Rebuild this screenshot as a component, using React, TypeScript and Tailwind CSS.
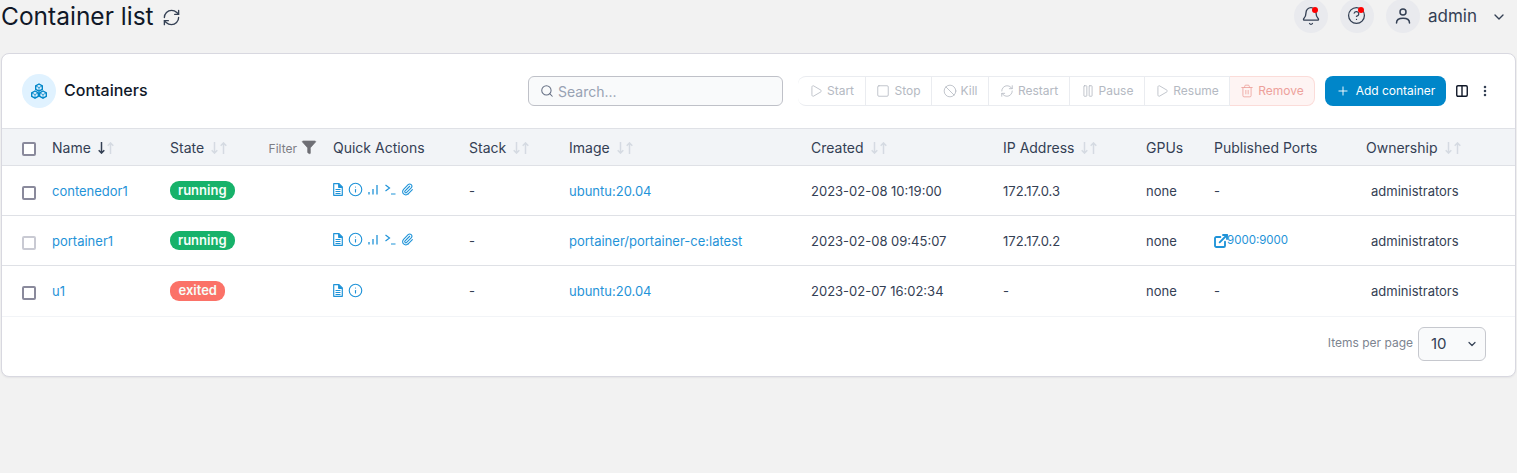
import React from "react";
import {
  RefreshCw, Bell, HelpCircle, ChevronDown, Search, Play, Square, Ban, Pause, Trash2, Plus,
  Columns2, MoreVertical, Filter, Info, ExternalLink,
} from "lucide-react";

const GRID = "grid grid-cols-[30px_118px_163px_136px_100px_242px_192px_143px_68px_152px_1fr] items-center pl-5 pt-[2px]";

function Sort({ active }: { active?: boolean }) {
  return (
    <span className="inline-flex ml-[7px] gap-[2px] items-center">
      <svg width="7" height="12" viewBox="0 0 7 12" fill="none" stroke="currentColor" strokeWidth="1.500" className={active ? "text-[#344054]" : "text-[#d5dae2]"}>
        <path d="M3.500 0v11M.7 8.300l2.800 2.800 2.800-2.800" />
      </svg>
      <svg width="7" height="12" viewBox="0 0 7 12" fill="none" stroke="currentColor" strokeWidth="1.500" className="text-[#d5dae2]">
        <path d="M3.500 12V1M.7 3.700 3.500.9l2.800 2.800" />
      </svg>
    </span>
  );
}

function Cb({ light }: { light?: boolean }) {
  return (
    <span className={`block mt-[2px] w-[14px] h-[14px] rounded-[2px] border-2 bg-white ${light ? "border-[#c9cad3]" : "border-[#8a8a9c]"}`} />
  );
}

function Badge({ label, exited }: { label: string; exited?: boolean }) {
  return (
    <span className={`inline-flex items-center rounded-[9px] text-[13px] font-semibold text-[#f6fef9] ${exited ? "h-[20px] px-[8.500px] bg-[#fb7268]" : "h-[19px] px-2 bg-[#17b26a]"}`}>
      {label}
    </span>
  );
}

function FileIcon() {
  return (
    <svg width="10" height="13" viewBox="0 0 10 13" fill="none" stroke="currentColor" strokeWidth="1.2" strokeLinejoin="round">
      <path d="M.7.7h5.300L9.300 4v8.300H.7z" />
      <path d="M5.700.7V4.300h3.600" fill="currentColor" />
      <path d="M2.500 6.500h5M2.500 8.500h5M2.500 10.500h5" strokeWidth="1" />
    </svg>
  );
}

function Quick({ short }: { short?: boolean }) {
  return (
    <div className="flex items-center -mt-[4px] text-[#1f93d8]">
      <FileIcon />
      <Info size={15} strokeWidth={1.8} className="ml-[5px] -mr-px" />
      {!short && (
        <>
          <svg width="10" height="11" viewBox="0 0 10 11" fill="none" stroke="currentColor" strokeWidth="1.3" className="ml-[6px]"><path d="M1 10.500V8M5 10.500V5M9 10.500V1" /></svg>
          <svg width="11" height="11" viewBox="0 0 11 11" fill="none" stroke="currentColor" strokeWidth="1.2" className="ml-[7px]"><path d="M.5 1l4 3-4 3M6 10h4.500" /></svg>
          <svg width="13" height="13" viewBox="0 0 24 24" fill="none" stroke="currentColor" strokeWidth="2" strokeLinecap="round" strokeLinejoin="round" className="ml-[5px]">
            <path d="M13.234 20.252 21 12.300" />
            <path d="m16 6-8.414 8.586a2 2 0 0 0 0 2.828 2 2 0 0 0 2.828 0l8.414-8.586a4 4 0 0 0 0-5.656 4 4 0 0 0-5.656 0l-8.415 8.585a6 6 0 1 0 8.486 8.486" />
          </svg>
        </>
      )}
    </div>
  );
}

function Th({ children, sort, active }: { children: React.ReactNode; sort?: boolean; active?: boolean }) {
  return (
    <div className="flex items-center text-sm text-[#344054]">
      <span>{children}</span>
      {sort && <Sort active={active} />}
    </div>
  );
}

function ActionBtn({ icon, label, w, danger, last, first }: { icon: React.ReactNode; label: string; w: string; danger?: boolean; last?: boolean; first?: boolean }) {
  return (
    <div className={`flex items-center justify-center gap-[4px] h-[30px] shrink-0 text-xs border border-l-0 ${w} ${first ? "border-l rounded-l-lg" : ""} ${last ? "rounded-r-lg" : ""} ${danger ? "bg-[#fef4f3] border-[#fbdcd9] text-[#eda19b]" : "bg-white border-[#eaecf0] text-[#b4b9c2]"}`}>
      {icon}
      <span>{label}</span>
    </div>
  );
}

function Circle({ children, dot, dotLeft }: { children: React.ReactNode; dot?: boolean; dotLeft?: string }) {
  return (
    <div className="relative w-[34px] h-[34px] rounded-full bg-[#e9eaee] flex items-center justify-center text-[#344054]">
      {children}
      {dot && <span className={`absolute top-[8px] w-[6px] h-[6px] rounded-full bg-[#f00] ${dotLeft}`} />}
    </div>
  );
}

const rows = [
  { name: "contenedor1", state: "running", image: "ubuntu:20.04", created: "2023-02-08 10:19:00", ip: "172.17.0.3", port: "-" },
  { name: "portainer1", state: "running", image: "portainer/portainer-ce:latest", created: "2023-02-08 09:45:07", ip: "172.17.0.2", port: "9000:9000", light: true },
  { name: "u1", state: "exited", image: "ubuntu:20.04", created: "2023-02-07 16:02:34", ip: "-", port: "-" },
];

export default function App() {
  return (
    <div className="h-[473px] overflow-hidden bg-[#f2f2f2] font-['Inter',sans-serif] text-[#101828]">
      <header className="h-[53px] flex items-start justify-between">
        <div className="flex items-center h-[33px] pl-[1px] gap-[8px]">
          <h1 className="text-[24.500px] leading-[33px] font-normal text-[#101828]">Container list</h1>
          <RefreshCw size={19} strokeWidth={1.7} className="text-[#344054] mt-[2px]" />
        </div>
        <div className="flex items-center h-[33px] -mt-px">
          <div className="flex gap-3">
            <Circle dot dotLeft="left-[18px]"><Bell size={20} strokeWidth={1.6} /></Circle>
            <Circle dot dotLeft="left-[18px]"><HelpCircle size={19} strokeWidth={1.6} /></Circle>
            <Circle>
              <svg width="18" height="18" viewBox="0 0 18 18" fill="none" stroke="currentColor" strokeWidth="1.5" strokeLinecap="round">
                <circle cx="9" cy="5" r="3" />
                <path d="M2.500 16c0-3.200 2.800-4.700 6.500-4.700s6.500 1.500 6.500 4.700" />
              </svg>
            </Circle>
          </div>
          <span className="ml-2 mt-[2px] text-[17px] text-[#344054]">admin</span>
          <ChevronDown size={16} strokeWidth={2} className="ml-[14px] mr-[10px] mt-[2px] text-[#344054]" />
        </div>
      </header>

      <section className="mx-px h-[324px] bg-white border border-[#d8d8e0] rounded-lg shadow-[0_1px_2px_rgba(16,24,40,0.06)] overflow-hidden">
        <div className="h-[74px] flex items-center pl-5">
          <div className="w-[34px] h-[34px] shrink-0 rounded-full bg-[#e0f2ff] flex items-center justify-center text-[#0086c9]">
            <svg width="18" height="17" viewBox="0 0 18 17" fill="none" stroke="currentColor" strokeWidth="1.4" strokeLinejoin="round">
              <path d="M9 1l3.300 1.800v3.600L9 8.200 5.700 6.400V2.800z" />
              <path d="M5 8l3.300 1.800v3.600L5 15.200l-3.300-1.800V9.800z" />
              <path d="M13 8l3.300 1.800v3.600L13 15.200l-3.300-1.800V9.800z" />
              <path d="M5.700 2.800 9 4.600l3.300-1.800M9 4.600v3.600M1.700 9.800 5 11.600l3.300-1.800M5 11.600v3.600M9.700 9.800l3.300 1.800 3.300-1.800M13 11.600v3.600" strokeWidth="0.8" />
            </svg>
          </div>
          <h2 className="ml-2 -mt-[3px] w-[84px] shrink-0 text-base font-medium text-[#101828]">Containers</h2>
          <div className="ml-[380px] shrink-0 w-[255px] h-[30px] flex items-center gap-[4px] pl-[11px] bg-[#f9fafb] border border-[#bfc1c8] rounded-md">
            <Search size={14} strokeWidth={1.8} className="text-[#667085]" />
            <span className="mt-[1px] text-sm text-[#98a2b3]">Search...</span>
          </div>
          <div className="ml-[15px] flex">
            <ActionBtn first w="w-[68px]" icon={<Play size={14} strokeWidth={1.4} />} label="Start" />
            <ActionBtn w="w-[66px]" icon={<Square size={14} strokeWidth={1.4} />} label="Stop" />
            <ActionBtn w="w-[57px]" icon={<Ban size={14} strokeWidth={1.4} />} label="Kill" />
            <ActionBtn w="w-[81px]" icon={<RefreshCw size={14} strokeWidth={1.4} />} label="Restart" />
            <ActionBtn w="w-[75px]" icon={<Pause size={14} strokeWidth={1.4} />} label="Pause" />
            <ActionBtn w="w-[85px]" icon={<Play size={14} strokeWidth={1.4} />} label="Resume" />
            <ActionBtn last danger w="w-[85px]" icon={<Trash2 size={14} strokeWidth={1.4} />} label="Remove" />
          </div>
          <div className="ml-[10px] h-[30px] w-[121px] shrink-0 flex items-center justify-center gap-[6px] rounded-lg bg-[#0086c9] text-white text-xs">
            <Plus size={14} strokeWidth={1.6} />
            <span>Add container</span>
          </div>
          <Columns2 size={14} strokeWidth={2.4} className="ml-[9px] shrink-0 text-[#101828]" />
          <MoreVertical size={14} strokeWidth={2.4} className="ml-[9px] shrink-0 text-[#344054]" />
        </div>

        <div className={`${GRID} h-[38px] bg-[#f2f4f7] border-y border-[#dfe1e6]`}>
          <Cb />
          <Th sort active>Name</Th>
          <div className="flex items-center justify-between pr-[16px]">
            <Th sort>State</Th>
            <div className="flex items-center gap-[4px] text-xs text-[#7d7d85]">
              <span className="mt-[2px]">Filter</span>
              <Filter size={16} fill="currentColor" strokeWidth={1} className="text-[#6f6f75] -mt-[2px]" />
            </div>
          </div>
          <Th>Quick Actions</Th>
          <Th sort>Stack</Th>
          <Th sort>Image</Th>
          <Th sort>Created</Th>
          <Th sort>IP Address</Th>
          <Th>GPUs</Th>
          <Th>Published Ports</Th>
          <Th sort>Ownership</Th>
        </div>

        {rows.map((r, i) => (
          <div key={r.name} className={`${GRID} text-[13px] text-[#344054] border-b ${i === 2 ? "h-[51px] border-[#f2f4f7]" : "h-[50px] border-[#dfe1e6]"}`}>
            <Cb light={r.light} />
            <a className="text-[#1f93d8]">{r.name}</a>
            <div className="-mt-[2px]"><Badge label={r.state} exited={r.state === "exited"} /></div>
            <Quick short={r.state === "exited"} />
            <span>-</span>
            <a className="text-[#1f93d8]">{r.image}</a>
            <span>{r.created}</span>
            <span>{r.ip}</span>
            <span>none</span>
            {r.port === "-" ? (
              <span>-</span>
            ) : (
              <a className="flex items-center text-[11.500px] text-[#1f93d8] -mt-[2px]">
                <ExternalLink size={16} strokeWidth={2.800} className="-ml-px -mr-[2px]" />
                {r.port}
              </a>
            )}
            <span className="pl-[5px]">administrators</span>
          </div>
        ))}

        <div className="h-[60px] flex items-center justify-end pr-[29px] pb-[6px]">
          <span className="text-xs text-[#7d8490] -mt-[2px]">Items per page</span>
          <div className="ml-[5px] w-[68px] h-[34px] flex items-center justify-between pl-3 pr-[7px] bg-[#f9fafb] border border-[#c6c8ce] rounded-md text-[15px] text-[#344054]">
            <span>10</span>
            <ChevronDown size={12} strokeWidth={2.4} className="text-[#344054]" />
          </div>
        </div>
      </section>
    </div>
  );
}
